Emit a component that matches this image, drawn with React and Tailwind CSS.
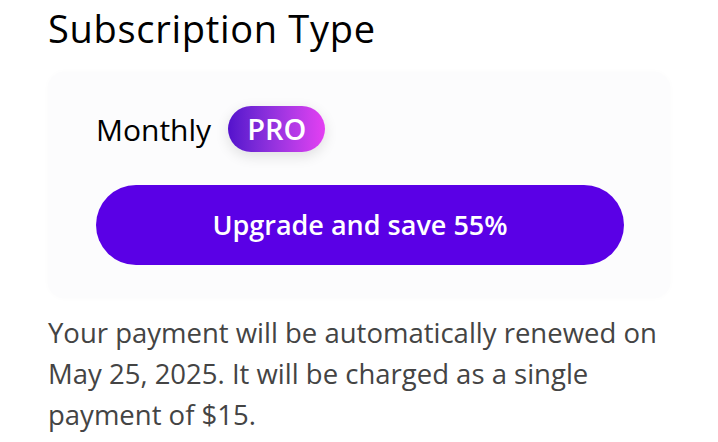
export default function App() {
  return (
    <div className="w-[718px] h-[442px] bg-white overflow-hidden px-12 pt-[4px] font-['Open_Sans',sans-serif]">
      <h2 className="text-[38px] leading-[48px] font-medium text-black tracking-[0.7px]">Subscription Type</h2>

      <div className="mt-[20px] w-[622px] h-[226px] rounded-[16px] bg-[#fcfcfd] shadow-[0_0_6px_rgba(0,0,0,0.02)] px-12 pt-[34px]">
        <div className="flex items-center gap-[17px]">
          <span className="text-[30px] text-black">Monthly</span>
          <span className="h-[46px] px-[19px] flex items-center rounded-full bg-gradient-to-r from-[#5410cc] to-[#e43ff2] text-white text-[29px] font-semibold shadow-[0_4px_14px_rgba(0,0,0,0.12)]">
            PRO
          </span>
        </div>
        <button className="mt-[33px] w-[528px] h-[80px] rounded-full bg-[#5a00e6] text-white text-[27px] font-semibold">
          Upgrade and save 55%
        </button>
      </div>

      <p className="mt-[14px] text-[27.5px] leading-[41px] text-[#444]">
        Your payment will be automatically renewed on May 25, 2025. It will be charged as a single payment of $15.
      </p>
    </div>
  );
}
